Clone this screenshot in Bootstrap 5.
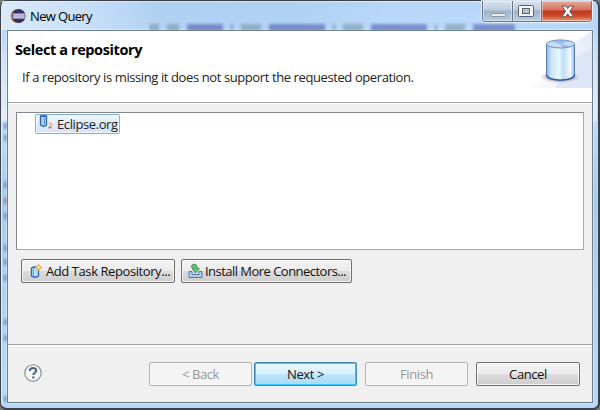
<!DOCTYPE html>
<html lang="en">
<head>
<meta charset="utf-8">
<title>New Query</title>
<link href="https://cdn.jsdelivr.net/npm/bootstrap@5.3.0/dist/css/bootstrap.min.css" rel="stylesheet">
<style>
body{width:600px;height:410px;overflow:hidden;background:#777;font-family:"Open Sans","Noto Sans",sans-serif;font-size:13px;line-height:16px;color:#222}
.win{width:600px;height:410px;border:1px solid #3d4149;border-right-width:2px;border-bottom-width:2px;border-radius:7px;padding:0 5px 5px 6px;background:linear-gradient(#fff8,#fff0 2px),linear-gradient(180deg,#b4d3f3 0,#b9d8f7 28px,#cfe2f8 60px,#e3eefb 118px,#bddcfb 122px,#b5d6f5 150px,#a5cbea 200px,#afd1f2 280px,#b8d9fa 100%);box-shadow:inset 1px 1px 0 #e3effb,inset -1px -1px 0 #a9e0fa}
.titlebar{height:29px;margin:0 -4px 0 -5px;padding-left:8px;background:linear-gradient(90deg,#e2effccc 0,#d0e4fa99 90px,#a5c9ec66 160px,#a7cdf066 300px,#c1dcff66 400px,#b9dafa33 100%)}
.ghost{left:148px;top:21px;height:8px;width:395px;overflow:hidden}
.ghost i{height:8px;margin-top:2px;filter:blur(1.500px);opacity:.5}
.side-ghost{left:2px;width:4px;top:120px;height:284px;overflow:hidden;opacity:.4}
.side-ghost i{position:absolute;left:0;width:5px;height:6px;background:#315d91;filter:blur(1.500px)}
.cap{height:21px;width:110px;margin-right:5px;border:1px solid #66778b;border-top:0;border-radius:0 0 4px 4px;overflow:hidden;box-shadow:0 0 1px 1px #e6f2ff}
.cap span{border-right:1px solid #66778b;background:linear-gradient(#d9e3ef 0,#bdcbdc 45%,#9fb2c9 50%,#b8cce2 100%);box-shadow:inset 0 0 0 1px #ffffff70}
.cap .x{border:0;background:linear-gradient(#e5ab9c 0,#d66f5c 45%,#bf3520 50%,#cd4b2c 75%,#e49a71 100%)}
.client{border:1px solid #717e8c;background:#f0f0f0;box-shadow:0 0 0 1px #e5f1fc80}
.head{height:71px;background:#fff;padding-left:7px}
.head h1{font-size:14.500px;line-height:18px;font-weight:700;color:#000;margin:10px 0 0;letter-spacing:-.4px}
.head p{margin:10px 0 0 7px}
.banner{width:66px;height:57px}
.rule{height:2px;background:#a0a0a0;border-bottom:1px solid #fff}
.list{height:138px;margin:8px 8px 0;border:1px solid #8d919b;border-color:#828790 #a4a8b0 #a4a8b0 #828790;background:#fff;padding:1px 0 0 18px}
.item{height:20px;width:85px;border:1px solid #84acdd;border-radius:2px;background:linear-gradient(#eff6fe,#cfe3fb);box-shadow:inset 0 0 0 1px #f3f8fe}
.b{font-size:13px;line-height:16px;height:24px;padding:0 0 1px;border:1px solid #707070;border-radius:2px;color:#111;background:linear-gradient(#f3f3f3 0,#ebebeb 49%,#dcdcdc 50%,#cecece 100%);box-shadow:inset 0 0 0 1px #fafafacc;white-space:nowrap}
.w{width:103px}
.b:disabled{opacity:1;color:#969696;border-color:#acb2b6;background:#f4f4f4}
.b.def{border-color:#3c8bb9;background:linear-gradient(#eaf6fd 0,#d9f0fc 49%,#bee6fd 50%,#a9daf3 100%);box-shadow:inset 0 0 0 1px #3bc7f4}
.n{letter-spacing:-.4px}
svg{display:block;flex:none}
</style>
<script src="https://cdn.jsdelivr.net/npm/bootstrap@5.3.0/dist/js/bootstrap.bundle.min.js"></script>
</head>
<body>
<div class="win d-flex flex-column position-relative">
  <div class="side-ghost position-absolute"><i style="top:2px"></i><i style="top:14px"></i><i style="top:61px;background:#4452a0"></i><i style="top:77px;background:#8a3a80"></i><i style="top:92px"></i><i style="top:124px"></i><i style="top:138px"></i><i style="top:154px"></i><i style="top:198px"></i><i style="top:214px"></i><i style="top:275px"></i></div>
  <div class="titlebar d-flex align-items-start">
    <svg width="16" height="16" viewBox="0 0 16 16" style="margin-top:7px"><circle cx="7.3" cy="8" r="7" fill="#f0a14b"/><circle cx="8.6" cy="8" r="7" fill="#382f68"/><path d="M3 5.500h11.500v5H3z" fill="#a9a6ca"/><path d="M2.500 6.300h12.500M2.500 8.200h12.500M2.500 10h12.500" stroke="#cfcde2" stroke-width=".8"/></svg>
    <span class="text-black" style="margin:7px 0 0 4px;letter-spacing:-.65px">New Query</span>
    <div class="ghost position-absolute d-flex gap-2"><i style="width:10px;background:#6d8a9a"></i><i style="width:12px;background:#6d8a9a"></i><i style="width:36px;background:#3a47a8"></i><i style="width:2px;background:#567"></i><i style="width:20px;background:#6d8a9a"></i><i style="width:56px;background:#3a47a8"></i><i style="width:2px;background:#567"></i><i style="width:20px;background:#6d8a9a"></i><i style="width:56px;background:#3a47a8"></i><i style="width:2px;background:#567"></i><i style="width:20px;background:#6d8a9a"></i><i style="width:42px;background:#3a47a8"></i></div>
    <div class="cap d-flex ms-auto position-relative">
      <span style="width:30px"><svg width="30" height="20"><rect x="8.5" y="12.5" width="14" height="3" rx="1" fill="#eee" stroke="#8795a7"/></svg></span>
      <span style="width:29px"><svg width="28" height="20"><rect x="5.500" y="4.500" width="15" height="11" rx="1" fill="#f5f5f5" stroke="#59616f"/><rect x="9.500" y="7.500" width="7" height="5" fill="#b5c5d8" stroke="#59616f"/></svg></span>
      <span class="x flex-fill"><svg width="50" height="20"><path d="M20 5h4l1.700 2.500L27.500 5h4l-3.700 5.300 3.900 5.500h-4l-2-3-2 3h-4l3.900-5.500z" fill="#fafafa" stroke="#685057"/></svg></span>
    </div>
  </div>
  <main class="client flex-fill d-flex flex-column">
    <header class="head d-flex justify-content-between">
      <div><h1>Select a repository</h1><p style="letter-spacing:-.4px">If a repository is missing it does not support the requested operation.</p></div>
      <svg class="banner" viewBox="0 0 66 57">
        <defs><linearGradient id="bg"><stop stop-color="#fff"/><stop offset=".5" stop-color="#f1f3fb"/><stop offset="1" stop-color="#e6ecf9"/></linearGradient>
        <linearGradient id="cy"><stop stop-color="#8fb6e4"/><stop offset=".18" stop-color="#cfe5f7"/><stop offset=".45" stop-color="#e5faff"/><stop offset=".6" stop-color="#c0ddf5"/><stop offset=".85" stop-color="#f2faff"/><stop offset="1" stop-color="#92b5e2"/></linearGradient>
        <radialGradient id="sh"><stop offset=".6" stop-color="#a28694"/><stop offset="1" stop-color="#a28694" stop-opacity="0"/></radialGradient></defs>
        <path d="M0 57Q45 42 50 10L66 0V57z" fill="url(#bg)"/><path d="M30 57Q38 29 66 18V57z" fill="#d2def4" opacity=".5"/>
        <ellipse cx="34" cy="46" rx="20" ry="6" fill="url(#sh)" opacity=".6"/>
        <path d="M20.500 13v31c0 7 28 7 28 0V13z" fill="url(#cy)" stroke="#557fbc"/><path d="M20.500 43.500c0 7.500 28 7.500 28 0" fill="none" stroke="#2856a5" stroke-width="1.300"/>
        <ellipse cx="34.500" cy="13" rx="14" ry="4" fill="#c4dcf5" stroke="#6b90c8"/><path d="M34 13l-9-3q9-3 18 0zM34 13l10 2-7 2z" fill="#86a9d8" opacity=".7"/>
      </svg>
    </header>
    <div class="rule"></div>
    <div class="list"><div class="item d-flex">
      <svg width="15" height="17" viewBox="0 0 15 17" style="margin-left:3px"><path d="M1.500 1v9q3 2.500 6 0V1z" fill="#a9d0f4" stroke="#3264ae" stroke-width="1.300"/><path d="M1.500 1.200h6" stroke="#3264ae" stroke-width="1.500"/><path d="M5.500 3v6" stroke="#5d91d1"/><path d="M9 13l2-2 1.500 2z" fill="#e35b42" stroke="#e58a70" stroke-width=".8"/><path d="M10 8.500q2-2 3 0v3l-1.500-1.500z" fill="#f3c9a4" stroke="#e2a987" stroke-width=".6"/></svg>
      <span style="margin:1px 0 0 3px;letter-spacing:-.4px">Eclipse.org</span></div></div>
    <div class="d-flex" style="padding:9px 13px;gap:6px">
      <button class="btn b d-flex align-items-center" style="width:154px"><svg width="13" height="16" viewBox="0 0 13 16" style="margin:0 4px 0 8px"><path d="M1.500 5v8q3.500 2.500 7 0V5q-3.500-2-7 0z" fill="#b6dcfa" stroke="#2c62b2" stroke-width="1.300"/><path d="M3.500 5.500v7.500" stroke="#71a4df"/><path d="M8.500 1l1 2.200 2.500 1.300-2.500 1.200-1 2.300-1-2.300L5 4.500l2.500-1.300z" fill="#ffe29a" stroke="#c59536" stroke-width=".8"/></svg><span style="letter-spacing:-.42px;margin-left:-1px">Add Task Repository...</span></button>
      <button class="btn b d-flex align-items-center" style="width:171px"><svg width="15" height="16" viewBox="0 0 15 16" style="margin:0 2px 0 6px"><path d="M1 8.500h3v3h7v-3h3v6H1z" fill="#b7cdea" stroke="#5477af"/><path d="M3 4q1-3.500 4-2.800 2.500.8 2.500 4.300h2L7.600 10 4 5.500h2Q6 3.500 3 4z" fill="#66c073" stroke="#32894a" stroke-width=".8"/></svg><span style="letter-spacing:-.53px">Install More Connectors...</span></button>
    </div>
    <div class="rule mt-auto"></div>
    <footer class="d-flex align-items-start" style="height:56px;padding:16px 12px 0 16px">
      <svg width="18" height="18" viewBox="0 0 18 18" style="margin-top:2px"><circle cx="9" cy="9" r="8.200" fill="#f7f7f8" stroke="#7c8799" stroke-width="1.100"/><path d="M5.800 7Q5.800 4 9 4t3.200 2.600Q12.200 8.200 10.500 9 9.300 9.700 9.300 11" fill="none" stroke="#4c628d" stroke-width="2"/><path d="M8.200 12.500h2.200v2H8.200z" fill="#4c628d"/></svg>
      <button class="btn b w n ms-auto" disabled>&lt; Back</button>
      <button class="btn b w n def" style="margin-left:2px">Next &gt;</button>
      <button class="btn b w n" style="margin-left:8px" disabled>Finish</button>
      <button class="btn b w n" style="margin-left:8px;width:104px">Cancel</button>
    </footer>
  </main>
</div>
</body>
</html>
